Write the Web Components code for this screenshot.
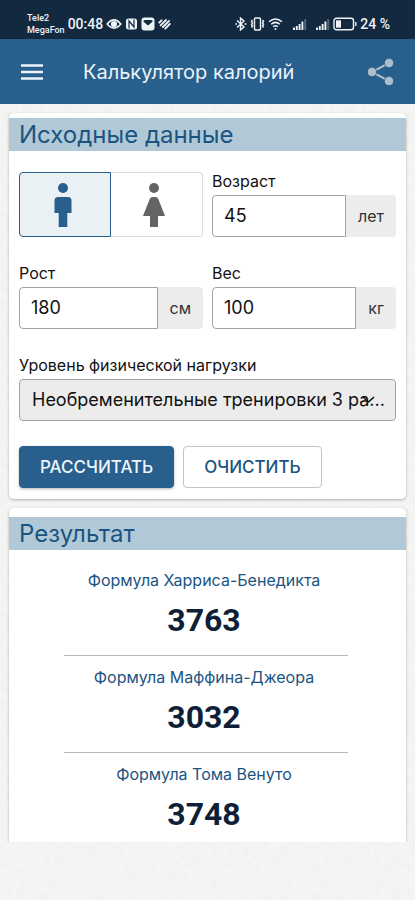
<!DOCTYPE html>
<html lang="ru">
<head>
<meta charset="utf-8">
<meta name="viewport" content="width=device-width, initial-scale=1">
<title>Калькулятор калорий</title>
<style>
  :root {
    --navy: #13293f;
    --blue: #295f8c;
    --link: #1b5482;
    --band: #b1c8d6;
    --line: #a3a3a3;
    --soft: #ececec;
  }
  body {
    margin: 0;
    font-family: Inter, Roboto, "Liberation Sans", sans-serif;
    color: #111;
  }
</style>
</head>
<body>
<calorie-app></calorie-app>

<script>
const define = (name, html, setup) => {
  const template = document.createElement('template');
  template.innerHTML = html;
  customElements.define(name, class extends HTMLElement {
    constructor() {
      super();
      this.attachShadow({ mode: 'open' }).append(template.content.cloneNode(true));
    }
    connectedCallback() {
      if (setup) setup(this, this.shadowRoot);
    }
  });
};

define('status-bar', `
  <style>
    :host { display: flex; justify-content: space-between; align-items: center; height: 39px; box-sizing: border-box;
      padding: 8px 25px 0 27px; background: var(--navy); color: #eef3f7; font-size: 13px; line-height: 16px; }
    .side { display: flex; align-items: center; gap: 3px; }
    .carrier { font: 500 9px/12px Roboto, sans-serif; }
    .time { font: 500 14px/16px Roboto, sans-serif; }
    svg { display: block; fill: none; stroke: currentColor; }
    .gap { margin-left: 5px; }
  </style>
  <div class="side">
    <div class="carrier">Tele2<br>MegaFon</div>
    <div class="time">00:48</div>
    <svg width="16" height="14" viewBox="0 0 16 14" stroke-width="1.600"><path d="M1.2 7Q8-1.200 14.800 7Q8 15.200 1.200 7Z"/><circle cx="8" cy="7" r="2.300" fill="currentColor"/></svg>
    <svg width="13" height="14" viewBox="0 0 13 14"><rect x="1" y="1.500" width="11" height="11" rx="2.500" fill="currentColor" stroke="none"/><path d="M4 11.500V4L9 10V2.500" stroke="#13293f" stroke-width="1.200"/></svg>
    <svg width="14" height="14" viewBox="0 0 14 14"><rect x=".5" y=".5" width="13" height="13" rx="3" fill="currentColor" stroke="none"/><path d="M2.300 4.500Q2.300 3 4 3H10Q11.700 3 11.700 4.500L7 8.500Z" fill="#13293f" stroke="none"/></svg>
    <svg width="13" height="14" viewBox="0 0 13 14" stroke-width="1.800" stroke-linecap="round"><path d="M1.300 5.500L3.500 3.300M2.500 8.300L8 3M4.800 10L11 4M7.300 11.500L11.800 7"/></svg>
  </div>
  <div class="side">
    <svg width="12" height="14" viewBox="0 0 12 14" stroke-width="1.400"><path d="M2 3.500L9 10L5.500 13V1L9 4L2 10.500M.3 7H2M9.500 7H11.500"/></svg>
    <svg width="15" height="14" viewBox="0 0 15 14" stroke-width="1.400"><rect x="4.500" y="1" width="6" height="12" rx="1"/><path d="M2.500 3L1.500 4.500L2.500 6L1.500 7.500L2.500 9L1.500 10.500M12.500 3L13.500 4.500L12.500 6L13.500 7.500L12.500 9L13.500 10.500"/></svg>
    <svg width="16" height="14" viewBox="0 0 16 14" stroke-width="1.500"><path d="M1 4.800Q7.500-.8 14 4.800M3.200 7.300Q7.500 3.500 11.800 7.300M5.200 9.800Q7.500 7.600 9.800 9.800"/><circle cx="7.500" cy="12" r="1" fill="currentColor" stroke="none"/></svg>
    <svg class="gap" width="15" height="14" viewBox="0 0 15 14" stroke-width="1.900"><path d="M2 13V10.500M4.800 13V9M7.600 13V7M10.400 13V4.500"/><path d="M13.200 13V2" opacity=".3"/></svg>
    <svg class="gap" width="15" height="14" viewBox="0 0 15 14" stroke-width="1.900"><path d="M2 13V10.500M4.800 13V9M7.600 13V7M10.400 13V4.500"/><path d="M13.200 13V2" opacity=".3"/></svg>
    <svg width="24" height="14" viewBox="0 0 24 14" stroke-width="1.400"><rect x="1" y="1.200" width="19.500" height="11.600" rx="2.500"/><rect x="3" y="3.300" width="5" height="7.400" fill="currentColor" stroke="none"/><path d="M22.800 5V9"/></svg>
    <div class="time">24 %</div>
  </div>`);

define('app-header', `
  <style>
    :host { display: flex; align-items: center; height: 65px; box-sizing: border-box; padding: 0 20px 0 21px; background: var(--blue); color: #e9f3fa; }
    h1 { flex: 1; margin: 0 0 0 40px; font-size: 20px; line-height: 24px; font-weight: 400; }
    button { display: block; padding: 0; border: 0; background: none; color: inherit; }
    svg { display: block; }
  </style>
  <button type="button" aria-label="Меню"><svg width="22" height="16" viewBox="0 0 22 16" stroke="currentColor" stroke-width="2.400"><path d="M0 1.500H22M0 8H22M0 14.500H22"/></svg></button>
  <h1><slot></slot></h1>
  <button type="button" aria-label="Поделиться"><svg width="28" height="28" viewBox="0 0 28 28" fill="#a9bfd1" stroke="#a9bfd1"><path d="M22 5L5 14L22 23" fill="none" stroke-width="2"/><g stroke="#1d4567" stroke-width=".6"><circle cx="22" cy="5" r="4.700"/><circle cx="5" cy="14" r="4.700"/><circle cx="22" cy="23" r="4.700"/></g></svg></button>`);

define('section-card', `
  <style>
    :host { display: block; padding-top: 5px; background: #fff; border-radius: 5px; box-shadow: 0 1px 3px rgba(0,0,0,.28); }
    h2 { margin: 0; padding: 0 10px; background: var(--band); color: var(--link); font-size: 24px; line-height: 33px; font-weight: 400; }
    .body { padding: 21px 10px 11px; }
    :host([results]) { padding-top: 9px; }
    :host([results]) .body { padding: 20px 13px 20px 10px; }
  </style>
  <h2><slot name="title"></slot></h2>
  <div class="body"><slot></slot></div>`);

define('gender-picker', `
  <style>
    :host { display: block; }
    fieldset { display: grid; grid-template-columns: 1fr 1fr; height: 65px; margin: 0; padding: 0; border: 0; }
    label { display: grid; place-items: center; padding-right: 5px; border: 1px solid #dcdcdc; border-left: 0; border-radius: 0 4px 4px 0; color: #646464; }
    label:first-child { border: 1px solid #dcdcdc; border-radius: 4px 0 0 4px; }
    label:has(:checked) { border-color: var(--blue); background: #eaf1f5; color: var(--blue); }
    input { grid-area: 1/1; width: 1px; height: 1px; margin: 0; opacity: 0; }
    svg { grid-area: 1/1; display: block; fill: currentColor; }
  </style>
  <fieldset aria-label="Пол">
    <label><input type="radio" name="gender" aria-label="Мужской" checked>
      <svg width="24" height="46" viewBox="0 0 24 46"><circle cx="12" cy="6" r="5"/><path d="M7 15H17Q20.500 15 20.500 18.500V31H16.300V45H7.700V31H3.500V18.500Q3.500 15 7 15Z"/></svg></label>
    <label><input type="radio" name="gender" aria-label="Женский">
      <svg width="24" height="46" viewBox="0 0 24 46"><circle cx="12" cy="6" r="5"/><path d="M10.500 15H13.500Q15.500 15 16.300 17L23 34H16V45H8V34H1L7.700 17Q8.500 15 10.500 15Z"/></svg></label>
  </fieldset>`);

define('unit-field', `
  <style>
    :host { display: block; min-width: 0; }
    label { display: block; font-size: 16px; line-height: 18px; margin-bottom: 5px; }
    .row { display: flex; height: 42px; }
    input { flex: 1; min-width: 0; box-sizing: border-box; padding: 0 11px; border: 1px solid var(--line); border-radius: 4px 0 0 4px; background: #fff; color: #111; font: 400 18px/20px Inter, Roboto, sans-serif; }
    span { display: flex; align-items: center; padding: 0 12px; background: var(--soft); border-radius: 0 4px 4px 0; font-size: 16px; line-height: 18px; color: #333; }
  </style>
  <label for="f"></label>
  <div class="row"><input id="f" type="text" inputmode="numeric"><span></span></div>`,
  (el, root) => {
    root.querySelector('label').textContent = el.getAttribute('label');
    root.querySelector('input').value = el.getAttribute('value');
    root.querySelector('span').textContent = el.getAttribute('unit');
  });

define('activity-select', `
  <style>
    :host { display: block; }
    label { display: block; margin-bottom: 5px; font-size: 16px; line-height: 18px; }
    .box { position: relative; }
    select { display: block; appearance: none; width: 100%; height: 42px; padding: 0 0 0 12px; border: 1px solid var(--line); border-radius: 4px; background: var(--soft); color: #111; font: 400 18px/20px Inter, Roboto, sans-serif; }
    svg { position: absolute; right: 21px; top: 17px; pointer-events: none; fill: none; stroke: #111; }
  </style>
  <label for="s">Уровень физической нагрузки</label>
  <div class="box">
    <select id="s"><option>Необременительные тренировки 3 ра...</option></select>
    <svg width="13" height="8" viewBox="0 0 13 8" stroke-width="1.600"><path d="M1 1L6.500 6L12 1"/></svg>
  </div>`);

define('action-button', `
  <style>
    :host { display: block; }
    button { display: block; height: 42px; padding: 0 20px; border: 1px solid #c4c4c4; border-radius: 4px; background: #fff; color: var(--link); font: 500 17px/20px Inter, Roboto, sans-serif; }
    :host([primary]) button { border-color: var(--blue); background: var(--blue); color: #eef6fb; box-shadow: 0 1px 3px rgba(0,0,0,.3); }
  </style>
  <button type="button"><slot></slot></button>`);

define('formula-result', `
  <style>
    :host { display: block; width: 76%; box-sizing: border-box; margin: 0 auto 11px; padding: 0 4px 15px 0; border-bottom: 1px solid #b8b8b4; text-align: center; }
    :host(:last-of-type) { border-bottom-color: transparent; }
    .name { font-size: 16px; line-height: 20px; color: var(--link); white-space: nowrap; }
    .value { margin-top: 10px; font: 700 32px/40px Roboto, Inter, sans-serif; color: #0f1f38; }
  </style>
  <div class="name"><slot name="name"></slot></div>
  <div class="value"><slot></slot></div>`);

define('calorie-app', `
  <style>
    :host { display: flex; flex-direction: column; height: 100vh; overflow: hidden;
      background: #f5f5f4 url("data:image/svg+xml,%3Csvg xmlns='http://www.w3.org/2000/svg' width='400' height='400'%3E%3Cfilter id='p'%3E%3CfeTurbulence type='fractalNoise' baseFrequency='.16' numOctaves='4' stitchTiles='stitch'/%3E%3CfeColorMatrix values='0 0 0 0 .5 0 0 0 0 .5 0 0 0 0 .47 .14 0 0 0 -.05'/%3E%3C/filter%3E%3Crect width='400' height='400' filter='url(%23p)'/%3E%3C/svg%3E"); }
    main { flex: 1; min-height: 0; overflow: hidden; display: flex; flex-direction: column; gap: 9px; padding: 9px 9px 0; }
    section-card { flex: none; }
    .grid { display: grid; grid-template-columns: 1fr 1fr; gap: 27px 9px; }
    activity-select { margin: 27px 0 25px; }
    .actions { display: flex; gap: 9px; }
    footer { flex: none; height: 58px; }
  </style>
  <status-bar></status-bar>
  <app-header>Калькулятор калорий</app-header>
  <main>
    <section-card>
      <span slot="title">Исходные данные</span>
      <div class="grid">
        <gender-picker></gender-picker>
        <unit-field label="Возраст" value="45" unit="лет"></unit-field>
        <unit-field label="Рост" value="180" unit="см"></unit-field>
        <unit-field label="Вес" value="100" unit="кг"></unit-field>
      </div>
      <activity-select></activity-select>
      <div class="actions">
        <action-button primary>РАССЧИТАТЬ</action-button>
        <action-button>ОЧИСТИТЬ</action-button>
      </div>
    </section-card>
    <section-card results>
      <span slot="title">Результат</span>
      <formula-result><span slot="name">Формула Харриса-Бенедикта</span>3763</formula-result>
      <formula-result><span slot="name">Формула Маффина-Джеора</span>3032</formula-result>
      <formula-result><span slot="name">Формула Тома Венуто</span>3748</formula-result>
    </section-card>
  </main>
  <footer></footer>`);
</script>
</body>
</html>
